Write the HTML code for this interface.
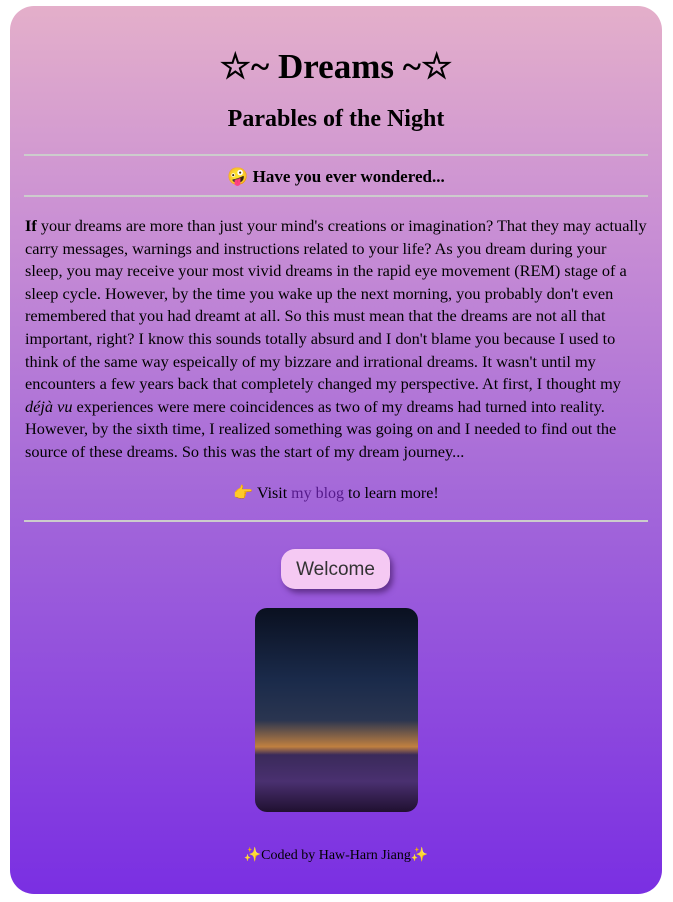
<!DOCTYPE html>
<html><head><meta charset="utf-8"><style>
body{margin:0;background:#fff;width:673px;height:902px;overflow:hidden;font-family:"Liberation Serif",serif;}
.card{position:absolute;left:10px;top:6px;width:652px;height:888px;border-radius:24px;background:linear-gradient(#e4afca 0%,#c98fd4 25%,#a468d9 55%,#7a2fe2 100%);}
.t{position:absolute;left:0;width:652px;text-align:center;color:#000;}
hr{position:absolute;left:14px;width:624px;margin:0;border:0;border-top:2px solid #ccc;}
p{position:absolute;left:15px;width:623px;margin:0;font-size:16.3px;line-height:22.6px;}
</style></head><body>
<div class="card">
<div class="t" style="top:41px;font-size:35px;font-weight:bold;">☆~ Dreams ~☆</div>
<div class="t" style="top:100px;font-size:24px;font-weight:bold;">Parables of the Night</div>
<hr style="top:148px">
<div class="t" style="top:161px;font-size:17px;font-weight:bold;">🤪 Have you ever wondered...</div>
<hr style="top:189px">
<p style="top:209px"><b>If</b> your dreams are more than just your mind's creations or imagination? That they may actually carry messages, warnings and instructions related to your life? As you dream during your sleep, you may receive your most vivid dreams in the rapid eye movement (REM) stage of a sleep cycle. However, by the time you wake up the next morning, you probably don't even remembered that you had dreamt at all. So this must mean that the dreams are not all that important, right? I know this sounds totally absurd and I don't blame you because I used to think of the same way espeically of my bizzare and irrational dreams. It wasn't until my encounters a few years back that completely changed my perspective. At first, I thought my <i>déjà vu</i> experiences were mere coincidences as two of my dreams had turned into reality. However, by the sixth time, I realized something was going on and I needed to find out the source of these dreams. So this was the start of my dream journey...</p>
<div class="t" style="top:477px;font-size:16px;">👉 Visit <span style="color:#551a8b">my blog</span> to learn more!</div>
<hr style="top:514px">
<div style="position:absolute;left:271px;top:543px;width:109px;height:40px;border-radius:14px;background:#f5c9f3;box-shadow:3px 4px 6px rgba(60,20,90,.6);font-family:'Liberation Sans',sans-serif;font-size:19px;color:#333;text-align:center;line-height:42px;">Welcome</div>
<div style="position:absolute;left:245px;top:602px;width:163px;height:204px;border-radius:12px;overflow:hidden;background:linear-gradient(#0a1020 0%,#1a2a4a 35%,#2a3550 55%,#c08040 68%,#3a2a5a 72%,#4a3070 85%,#201030 100%);"></div>
<div class="t" style="top:841px;font-size:14px;">✨Coded by Haw-Harn Jiang✨</div>
</div>
</body></html>
